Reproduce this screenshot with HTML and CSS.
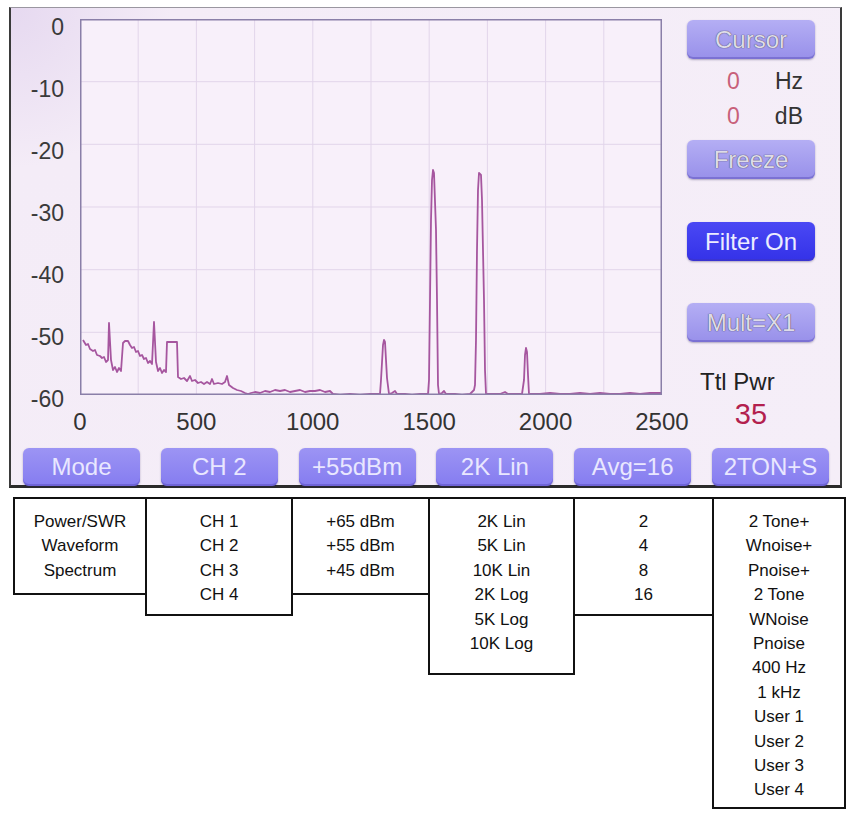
FILE: index.html
```html
<!DOCTYPE html>
<html lang="en">
<head>
    <meta charset="UTF-8">
    <meta name="viewport" content="width=device-width, initial-scale=1.0">
    <title>Spectrum Screen - Soft Key Menus</title>
    <link rel="stylesheet" href="styles.css">
</head>
<body>
    <div class="screen">
        <div class="main">
            <div class="yaxis">
                <span>0</span>
                <span>-10</span>
                <span>-20</span>
                <span>-30</span>
                <span>-40</span>
                <span>-50</span>
                <span>-60</span>
            </div>
            <div class="plotcol">
                <svg class="plot" width="582" height="376" viewBox="80 19 582 376">
                    <rect x="80" y="19" width="582" height="376" fill="#f8f0fa"/>
                    <g stroke="#e2d5ea" stroke-width="1">
                        <line x1="80" y1="81.7" x2="662" y2="81.7"/>
                        <line x1="80" y1="144.3" x2="662" y2="144.3"/>
                        <line x1="80" y1="207" x2="662" y2="207"/>
                        <line x1="80" y1="269.7" x2="662" y2="269.7"/>
                        <line x1="80" y1="332.3" x2="662" y2="332.3"/>
                        <line x1="138.2" y1="19" x2="138.2" y2="395"/>
                        <line x1="196.4" y1="19" x2="196.4" y2="395"/>
                        <line x1="254.6" y1="19" x2="254.6" y2="395"/>
                        <line x1="312.8" y1="19" x2="312.8" y2="395"/>
                        <line x1="371" y1="19" x2="371" y2="395"/>
                        <line x1="429.2" y1="19" x2="429.2" y2="395"/>
                        <line x1="487.4" y1="19" x2="487.4" y2="395"/>
                        <line x1="545.6" y1="19" x2="545.6" y2="395"/>
                        <line x1="603.8" y1="19" x2="603.8" y2="395"/>
                    </g>
                    <polyline fill="none" stroke="#a6569f" stroke-width="1.8" stroke-linejoin="round"
                        points="83,340 86,345 88,344 90,349 93,351 95,350 97,355 100,356 102,358 104,357 106,362 108,360 109,323 111,360 113,370 115,367 117,372 119,368 121,371 123,343 125,341 128,341 130,345 132,348 134,347 136,352 138,351 140,356 142,355 144,359 146,358 148,363 150,361 152,364 154,322 156,362 158,371 160,368 162,373 164,370 166,372 167,342 172,342 177,342 178,377 181,379 184,378 187,381 190,376 192,381 195,380 198,383 201,382 204,384 207,382 210,384 212,379 214,384 218,383 222,384 225,382 227,376 229,385 233,388 237,390 241,391 245,393 248,394 251,393 255,392 260,393 265,391 270,392 275,390 280,391 285,390 290,392 295,391 300,390 305,392 310,391 315,391 320,390 325,392 330,391 333,394 340,395 350,394 360,395 370,394 380,394 381,380 383,345 384,340 385,342 387,378 389,394 392,393 395,391 397,394 405,394 412,395 420,394 428,394 429,380 431,220 432,180 433,170 434,173 436,230 437,300 438,385 439,394 442,393 444,391 446,394 455,394 462,395 470,394 472,392 474,390 475,385 476,340 477,250 478,190 479,173 481,175 482,200 484,300 485,370 486,394 495,394 500,394 505,392 508,394 515,394 522,394 524,380 525,355 526,348 527,352 528,375 529,394 540,394 550,393 560,394 570,394 580,393 590,394 600,393 610,394 620,394 630,393 640,394 650,393 661,393"/>
                    <rect x="80.75" y="19.75" width="580.5" height="374.5" fill="none" stroke="#8a7fa8" stroke-width="1.5"/>
                </svg>
                <div class="xaxis">
                    <span>0</span>
                    <span>500</span>
                    <span>1000</span>
                    <span>1500</span>
                    <span>2000</span>
                    <span>2500</span>
                </div>
            </div>
            <div class="side">
                <div class="key dim">Cursor</div>
                <div class="readout first"><span class="val">0</span><span>Hz</span></div>
                <div class="readout"><span class="val">0</span><span>dB</span></div>
                <div class="key dim freeze">Freeze</div>
                <div class="key on filter">Filter On</div>
                <div class="key dim mult">Mult=X1</div>
                <div class="ttl">Ttl Pwr</div>
                <div class="ttl-val">35</div>
            </div>
        </div>
        <div class="softkeys">
            <div class="key">Mode</div>
            <div class="key">CH 2</div>
            <div class="key">+55dBm</div>
            <div class="key">2K Lin</div>
            <div class="key">Avg=16</div>
            <div class="key">2TON+S</div>
        </div>
    </div>

    <div class="menus">
        <ul class="menu m-mode">
            <li>Power/SWR</li>
            <li>Waveform</li>
            <li>Spectrum</li>
        </ul>
        <ul class="menu m-ch">
            <li>CH 1</li>
            <li>CH 2</li>
            <li>CH 3</li>
            <li>CH 4</li>
        </ul>
        <ul class="menu m-range">
            <li>+65 dBm</li>
            <li>+55 dBm</li>
            <li>+45 dBm</li>
        </ul>
        <ul class="menu m-span">
            <li>2K Lin</li>
            <li>5K Lin</li>
            <li>10K Lin</li>
            <li>2K Log</li>
            <li>5K Log</li>
            <li>10K Log</li>
        </ul>
        <ul class="menu m-avg">
            <li>2</li>
            <li>4</li>
            <li>8</li>
            <li>16</li>
        </ul>
        <ul class="menu m-gen">
            <li>2 Tone+</li>
            <li>Wnoise+</li>
            <li>Pnoise+</li>
            <li>2 Tone</li>
            <li>WNoise</li>
            <li>Pnoise</li>
            <li>400 Hz</li>
            <li>1 kHz</li>
            <li>User 1</li>
            <li>User 2</li>
            <li>User 3</li>
            <li>User 4</li>
        </ul>
    </div>
</body>
</html>
```

FILE: styles.css
```css
body {
    margin: 0;
    background: #fff;
    font-family: "Liberation Sans", Arial, sans-serif;
    color: #111;
}

/* device screen */
.screen {
    margin: 7px 0 0 9px;
    width: 829px;
    height: 477px;
    border: 2px solid #3a3a3a;
    border-top: 1px solid #9a96a0;
    border-bottom: 3px solid #2a2a2a;
    background: radial-gradient(circle at 0 0, #e6d9f0 0, #f4ecf7 160px, #f5eef8 100%);
}
.main {
    display: flex;
    height: 432px;
}
.main > div {
    flex-shrink: 0;
}
.yaxis {
    width: 53px;
    height: 396px;
    margin-top: 7px;
    display: flex;
    flex-direction: column;
    justify-content: space-between;
    align-items: flex-end;
    font-size: 23px;
    line-height: 24px;
    color: #3a3a3a;
}
.plotcol {
    width: 582px;
    margin-left: 16px;
    margin-top: 11px;
}
.plot {
    display: block;
}
.xaxis {
    display: flex;
    justify-content: space-between;
    width: 662px;
    margin-left: -40px;
    margin-top: 15px;
    font-size: 24px;
    line-height: 24px;
    color: #333;
}
.xaxis span {
    width: 80px;
    text-align: center;
}

/* right hand column */
.side {
    width: 128px;
    margin-left: 25px;
    padding-top: 12px;
    display: flex;
    flex-direction: column;
}
.readout {
    display: flex;
    justify-content: space-between;
    padding: 0 12px 0 40px;
    font-size: 23px;
    line-height: 35px;
    color: #333;
}
.readout.first {
    margin-top: 5px;
}
.val {
    color: #c8607a;
}
.freeze {
    margin-top: 6px;
}
.filter {
    margin-top: 43px;
}
.mult {
    margin-top: 42px;
}
.ttl {
    margin-top: 26px;
    padding-left: 13px;
    font-size: 24px;
    line-height: 28px;
    color: #222;
}
.ttl-val {
    margin-top: 2px;
    text-align: center;
    font-size: 29px;
    line-height: 32px;
    color: #b3204e;
}

/* buttons */
.key {
    height: 39px;
    line-height: 39px;
    border-radius: 6px;
    text-align: center;
    font-size: 24px;
    color: #e9e7ff;
    background: linear-gradient(#9c94f4, #857cf0);
    box-shadow: inset 0 -2px 0 rgba(70, 55, 170, 0.35), 0 1px 2px rgba(40, 30, 90, 0.35);
}
.key.dim {
    color: #dedce8;
    background: linear-gradient(#b4aef4, #9890ea);
    text-shadow: 0 0 1px #55506a, 0 0 1px #55506a;
}
.key.on {
    color: #ececff;
    background: linear-gradient(#4a48f4, #3432e8);
}
.softkeys {
    display: flex;
    justify-content: space-between;
    padding: 0 11px 0 12px;
    margin-top: 8px;
}
.softkeys .key {
    width: 117px;
    height: 38px;
    line-height: 38px;
}

/* soft key menus */
.menus {
    display: flex;
    align-items: flex-start;
    margin: 9px 0 0 13px;
}
.menu {
    list-style: none;
    margin: 0 0 0 -2px;
    padding: 11px 0 0;
    box-sizing: border-box;
    border: 2px solid #111;
    text-align: center;
    font-size: 17px;
    line-height: 24.4px;
}
.menu:first-child {
    margin-left: 0;
}
.m-mode { width: 134px; height: 98px; }
.m-ch { width: 148px; height: 119px; }
.m-range { width: 139px; height: 98px; }
.m-span { width: 147px; height: 178px; }
.m-avg { width: 141px; height: 119px; }
.m-gen { width: 134px; height: 312px; }
```
